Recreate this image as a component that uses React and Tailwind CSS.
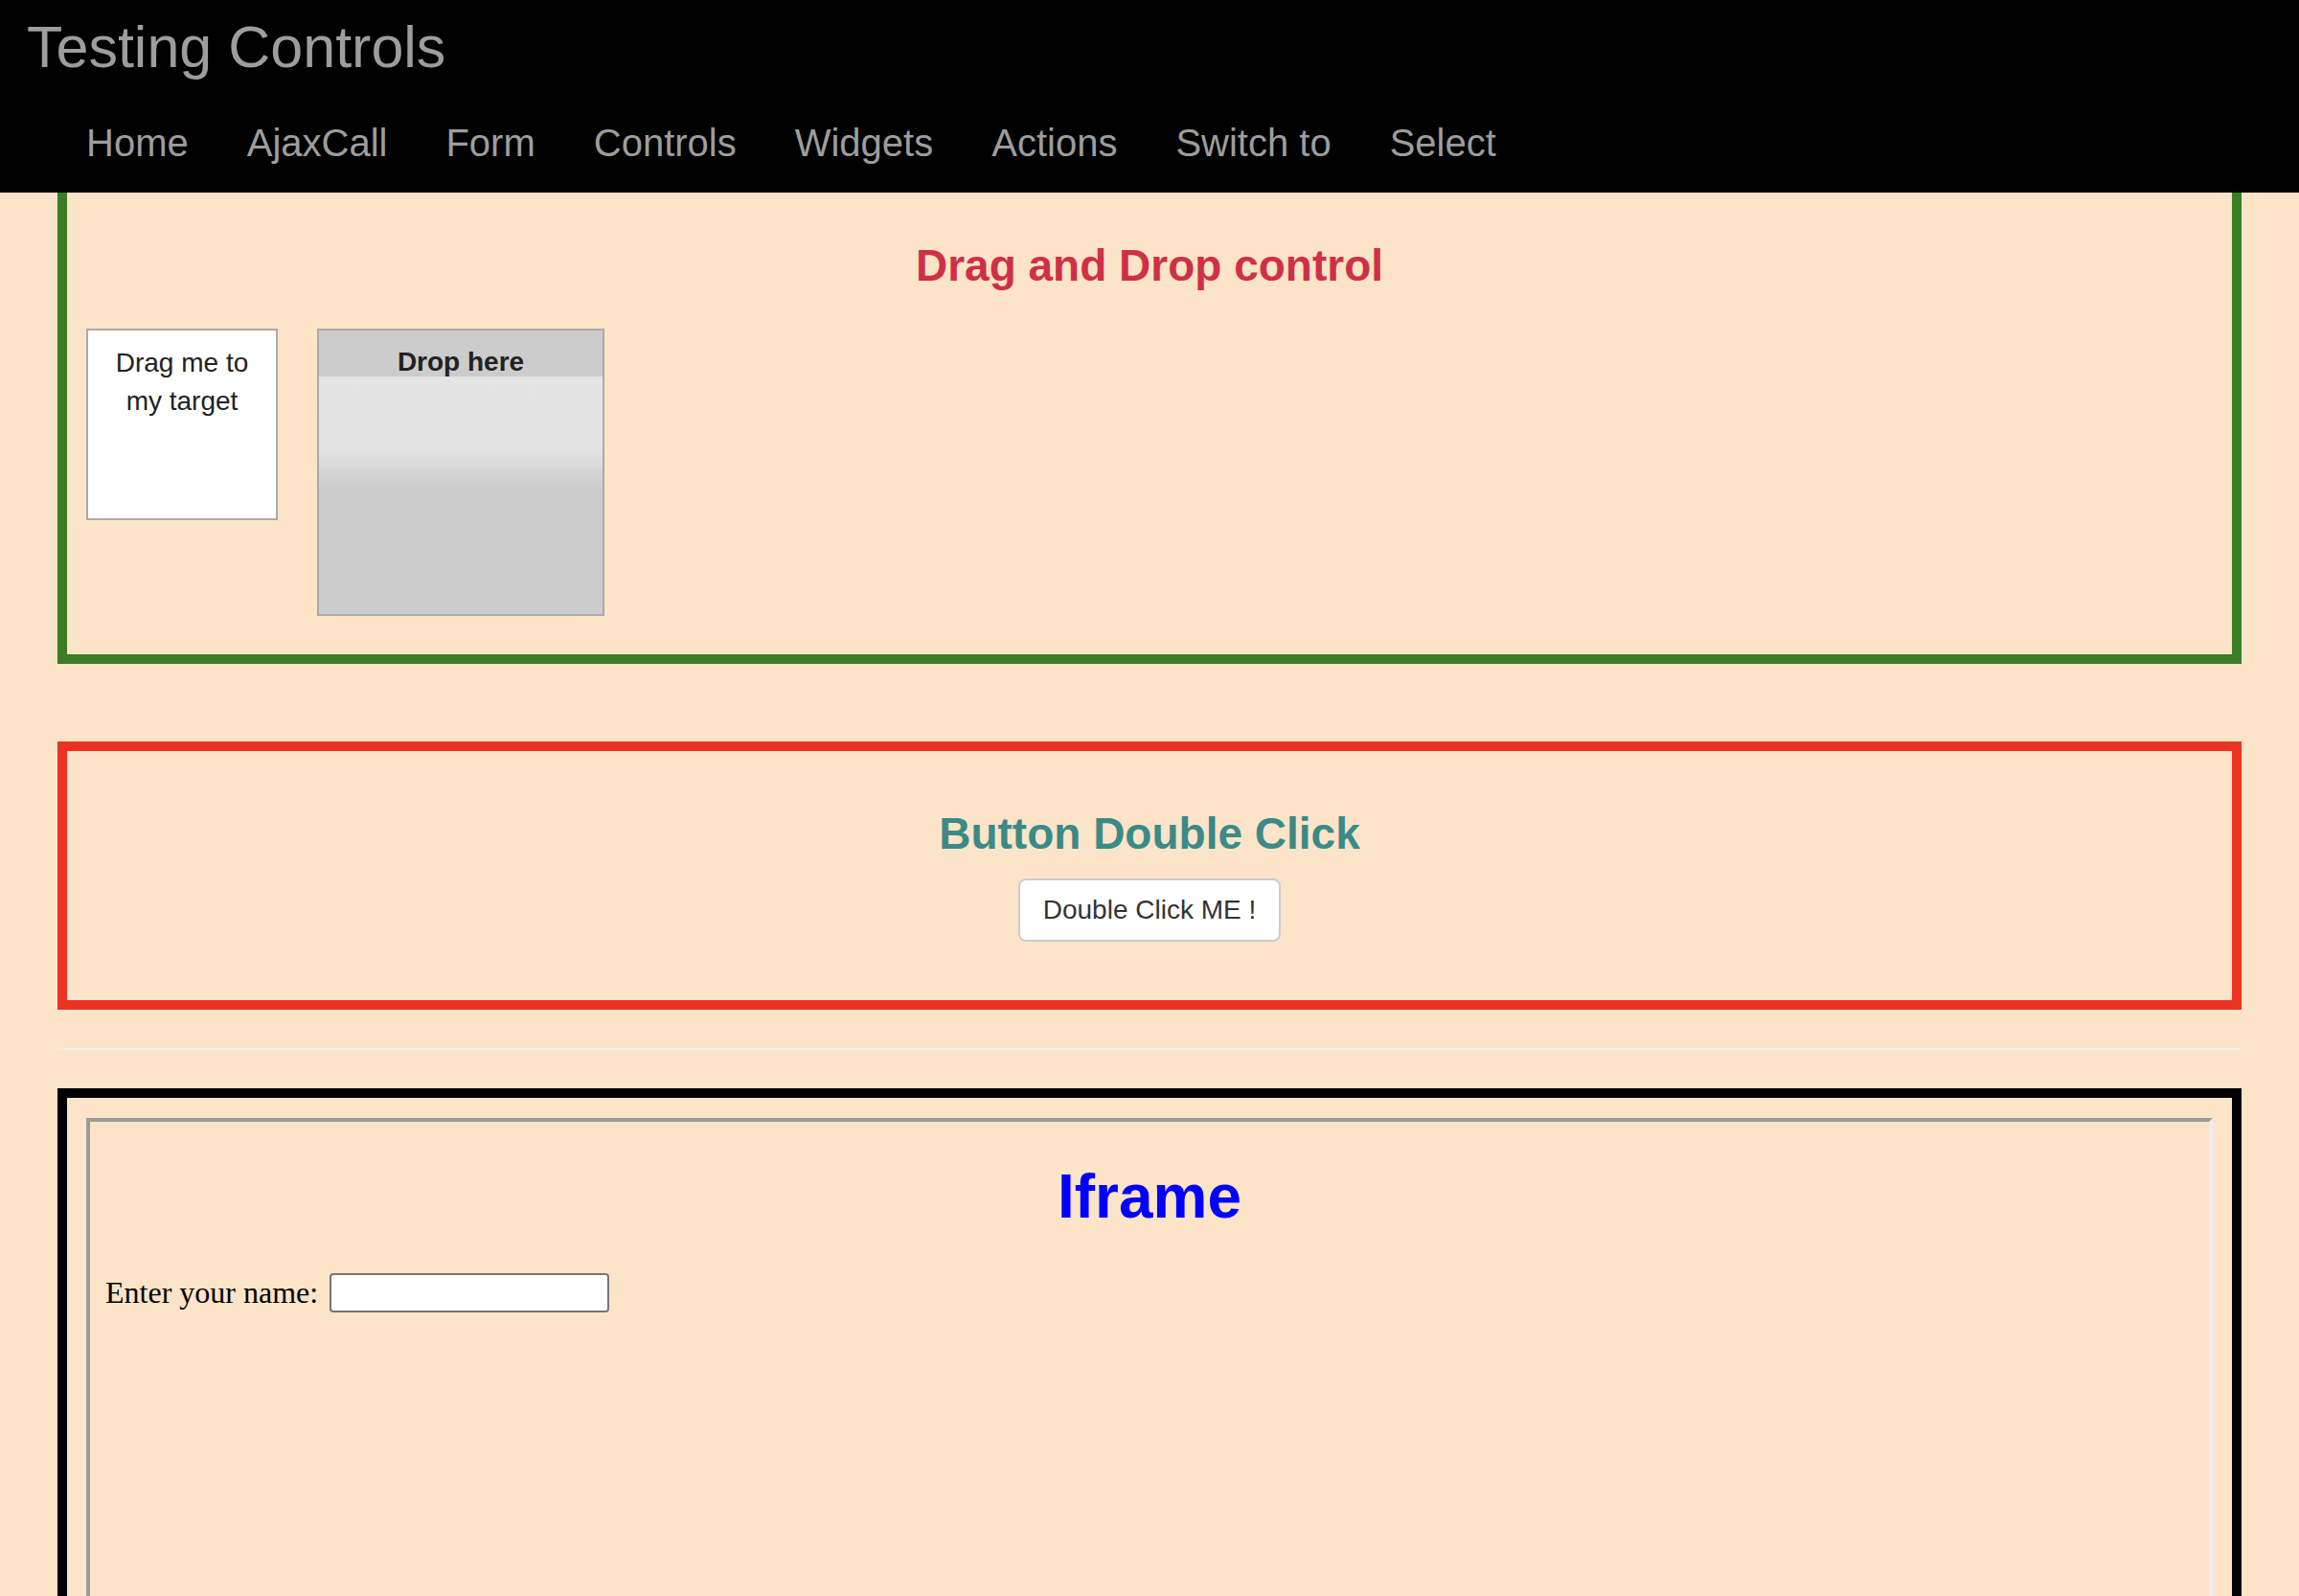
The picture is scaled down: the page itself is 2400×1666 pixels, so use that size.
import React from 'react';

const navItems = ['Home', 'AjaxCall', 'Form', 'Controls', 'Widgets', 'Actions', 'Switch to', 'Select'];

const App = () => {
  return (
    <div className="min-h-screen bg-[#fbe4c8] font-['Liberation_Sans',Arial,sans-serif]">
      {/* Navbar */}
      <header className="h-[201px] bg-black">
        <div className="pl-[28px] pt-[19px] text-[61px] leading-none text-[#9d9d9d]">Testing Controls</div>
        <nav className="mt-[49px] flex gap-[61px] pl-[90px] text-[40px] leading-none text-[#9d9d9d]">
          {navItems.map((item) => (
            <a key={item} href="#" className="whitespace-nowrap">
              {item}
            </a>
          ))}
        </nav>
      </header>

      <main className="px-[60px]">
        {/* Drag and drop */}
        <section className="border-x-[10px] border-b-[10px] border-[#3a7d24] px-[20px] pb-[40px] pt-[51px]">
          <h3 className="mb-[40px] text-center text-[46px] font-bold leading-[1.1] text-[#cf3045]">
            Drag and Drop control
          </h3>
          <div className="flex items-start gap-[41px]">
            <div className="h-[200px] w-[200px] border-2 border-[#aaaaaa] bg-white px-[12px] pt-[14px] text-center text-[28px] leading-[40px] text-[#222]">
              Drag me to my target
            </div>
            <div className="h-[300px] w-[300px] border-2 border-[#aaaaaa] bg-[linear-gradient(to_bottom,#cccccc_48px,#e4e4e4_48px,#e3e3e3_125px,#cbcbcb_165px)] pt-[13px] text-center text-[28px] font-bold leading-[40px] text-[#222]">
              Drop here
            </div>
          </div>
        </section>

        {/* Double click */}
        <section className="mt-[81px] flex flex-col items-center border-[10px] border-[#ea3323] pb-[61px] pt-[61px]">
          <h3 className="mb-[22px] text-center text-[46px] font-bold leading-[1.1] text-[#3c8a88]">
            Button Double Click
          </h3>
          <button className="h-[66px] rounded-[8px] border-2 border-[#cccccc] bg-white px-[24px] text-[28px] leading-[40px] text-[#333]">
            Double Click ME !
          </button>
        </section>

        <hr className="my-[40px] h-[2px] border-0 bg-[#eeeeee]" />

        {/* Iframe */}
        <section className="border-[10px] border-black px-[20px] pt-[21px]">
          <div className="h-[620px] border-4 border-b-[#ececec] border-l-[#9a9a9a] border-r-[#ececec] border-t-[#9a9a9a] px-[16px] pt-[41px]">
            <h1 className="mb-[43px] text-center text-[64px] font-bold leading-[74px] text-[#0000ff]">Iframe</h1>
            <div className="flex items-center font-['Liberation_Serif','Times_New_Roman',serif] text-[32px] text-black">
              <span className="leading-[37px]">Enter your name:</span>
              <input
                type="text"
                className="ml-[12px] h-[41px] w-[292px] rounded-[4px] border-2 border-[#767676] bg-white"
              />
            </div>
          </div>
        </section>
      </main>
    </div>
  );
};

export default App;
